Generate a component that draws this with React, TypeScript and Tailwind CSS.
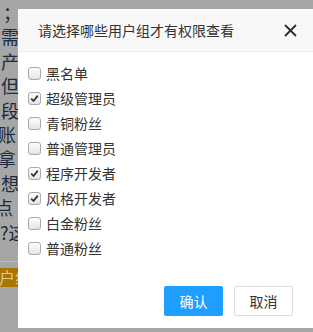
import React, { useState } from "react";

const groups = [
  { name: "黑名单", checked: false },
  { name: "超级管理员", checked: true },
  { name: "青铜粉丝", checked: false },
  { name: "普通管理员", checked: false },
  { name: "程序开发者", checked: true },
  { name: "风格开发者", checked: true },
  { name: "白金粉丝", checked: false },
  { name: "普通粉丝", checked: false },
];

const bgLines = [
  { t: "；", ml: "ml-[3px]" },
  { t: "需", ml: "ml-[1px]" },
  { t: "产", ml: "ml-[1px]" },
  { t: "但", ml: "ml-[1px]" },
  { t: "段", ml: "ml-[1px]" },
  { t: "账", ml: "-ml-[2px]" },
  { t: "拿", ml: "-ml-[2px]" },
  { t: "想", ml: "ml-[1px]" },
  { t: "点", ml: "-ml-[5px]" },
  { t: "?这", ml: "ml-0" },
];

function Box({ checked }: { checked: boolean }) {
  return (
    <span className="w-[13px] h-[13px] rounded-[3px] border border-[#a9a9a9] bg-gradient-to-b from-[#fdfdfd] to-[#e4e4e4] flex items-center justify-center shrink-0">
      {checked && (
        <svg width="9" height="9" viewBox="0 0 9 9">
          <path d="M1.2 4.6 L3.5 7 L7.8 1.6" fill="none" stroke="#333" strokeWidth="1.8" strokeLinejoin="round" />
        </svg>
      )}
    </span>
  );
}

export default function App() {
  const [items, setItems] = useState(groups);

  return (
    <div className="w-[313px] h-[332px] relative overflow-hidden bg-[#a6a6a6] font-['Noto_Sans_CJK_SC',sans-serif]">
      {/* page behind the shade */}
      <div className="text-[18px] leading-[24.4px] text-[#1b2a3c]">
        {bgLines.map((l) => (
          <div key={l.t} className={`${l.ml} whitespace-nowrap`}>{l.t}</div>
        ))}
      </div>
      <div className="mt-[17px] h-px bg-[#bdbdbd]" />
      <div className="mt-[6px] h-[19px] bg-[#a97400] text-[16px] leading-[19px] text-[#d9c6a0] -ml-[1px]">户组</div>

      {/* dialog */}
      <div className="absolute left-[18px] top-[9px] w-[300px] h-[319px] bg-white flex flex-col">
        <div className="h-[43px] bg-[#f8f8f8] border-b border-[#eeeeee] flex items-center pl-[20px] pr-[21px]">
          <span className="text-[14px] text-[#333] flex-1">请选择哪些用户组才有权限查看</span>
          <svg width="13" height="13" viewBox="0 0 13 13">
            <path d="M1 1 L12 12 M12 1 L1 12" stroke="#2b2b38" strokeWidth="1.8" />
          </svg>
        </div>

        <div className="pt-[9px] pl-[10px]">
          {items.map((g, i) => (
            <label
              key={g.name}
              className="h-[25px] flex items-center gap-[5px] text-[14px] text-[#333] cursor-pointer"
              onClick={() => setItems(items.map((x, j) => (j === i ? { ...x, checked: !x.checked } : x)))}
            >
              <Box checked={g.checked} />
              <span>{g.name}</span>
            </label>
          ))}
        </div>

        <div className="mt-auto mb-[12px] flex justify-end gap-[11px] pr-[25px]">
          <button className="w-[59px] h-[30px] rounded-[2px] bg-[#1e9fff] text-white text-[14px]">确认</button>
          <button className="w-[59px] h-[30px] rounded-[2px] bg-white border border-[#dedede] text-[#333] text-[14px]">取消</button>
        </div>
      </div>
    </div>
  );
}
